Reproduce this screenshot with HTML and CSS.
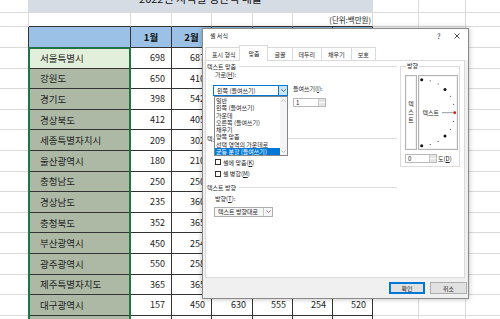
FILE: index.html
```html
<!DOCTYPE html>
<html>
<head>
    <meta charset="utf-8">
    <title>셀 서식</title>
    <link rel="stylesheet" href="styles.css">
</head>
<body>
<div class="sheet">
    <div></div><div class="title">2022년 지역별 생산액 매출</div><div></div><div></div><div></div>

    <div></div><div class="top"></div><div class="top"></div><div class="top"></div><div class="top"></div><div class="top"></div><div class="top unit">(단위:백만원)</div><div></div><div></div><div></div>

    <div class="edge"></div><div class="hd"></div><div class="hd">1월</div><div class="hd">2월</div><div class="hd">3월</div><div class="hd">4월</div><div class="hd">5월</div><div class="hd">6월</div><div></div><div></div><div></div>

    <div class="edge"></div><div class="rg act">서울특별시</div><div class="n">698</div><div class="n">687</div><div class="n">520</div><div class="n">415</div><div class="n">633</div><div class="n">478</div><div></div><div></div><div></div>
    <div class="edge"></div><div class="rg">강원도</div><div class="n">650</div><div class="n">410</div><div class="n">365</div><div class="n">254</div><div class="n">520</div><div class="n">610</div><div></div><div></div><div></div>
    <div class="edge"></div><div class="rg">경기도</div><div class="n">398</div><div class="n">542</div><div class="n">630</div><div class="n">555</div><div class="n">412</div><div class="n">398</div><div></div><div></div><div></div>
    <div class="edge"></div><div class="rg">경상북도</div><div class="n">412</div><div class="n">405</div><div class="n">254</div><div class="n">365</div><div class="n">450</div><div class="n">520</div><div></div><div></div><div></div>
    <div class="edge"></div><div class="rg">세종특별자치시</div><div class="n">209</div><div class="n">302</div><div class="n">450</div><div class="n">236</div><div class="n">540</div><div class="n">365</div><div></div><div></div><div></div>
    <div class="edge"></div><div class="rg">울산광역시</div><div class="n">180</div><div class="n">210</div><div class="n">320</div><div class="n">410</div><div class="n">250</div><div class="n">365</div><div></div><div></div><div></div>
    <div class="edge"></div><div class="rg">충청남도</div><div class="n">250</div><div class="n">250</div><div class="n">365</div><div class="n">450</div><div class="n">520</div><div class="n">254</div><div></div><div></div><div></div>
    <div class="edge"></div><div class="rg">경상남도</div><div class="n">235</div><div class="n">360</div><div class="n">410</div><div class="n">630</div><div class="n">555</div><div class="n">254</div><div></div><div></div><div></div>
    <div class="edge"></div><div class="rg">충청북도</div><div class="n">352</div><div class="n">365</div><div class="n">254</div><div class="n">450</div><div class="n">630</div><div class="n">555</div><div></div><div></div><div></div>
    <div class="edge"></div><div class="rg">부산광역시</div><div class="n">450</div><div class="n">254</div><div class="n">365</div><div class="n">520</div><div class="n">410</div><div class="n">236</div><div></div><div></div><div></div>
    <div class="edge"></div><div class="rg">광주광역시</div><div class="n">550</div><div class="n">258</div><div class="n">630</div><div class="n">555</div><div class="n">254</div><div class="n">520</div><div></div><div></div><div></div>
    <div class="edge"></div><div class="rg">제주특별자치도</div><div class="n">365</div><div class="n">365</div><div class="n">450</div><div class="n">250</div><div class="n">630</div><div class="n">410</div><div></div><div></div><div></div>
    <div class="edge"></div><div class="rg">대구광역시</div><div class="n">157</div><div class="n">450</div><div class="n">630</div><div class="n">555</div><div class="n">254</div><div class="n">520</div><div></div><div></div><div></div>
    <div class="edge"></div><div class="rg">대전광역시</div><div class="n">320</div><div class="n">410</div><div class="n">254</div><div class="n">365</div><div class="n">450</div><div class="n">630</div><div></div><div></div><div></div>

    <div class="sel"></div>
</div>

<div class="dialog">
    <div class="titlebar">
        <span class="dlg-title">셀 서식</span>
        <span class="tb-btn">?</span>
        <span class="tb-btn">
            <svg width="6" height="6" viewBox="0 0 6 6"><path d="M0.5 0.5L5.5 5.5M5.5 0.5L0.5 5.5" stroke="#222" stroke-width="0.8"/></svg>
        </span>
    </div>
    <div class="tabs">
        <span class="tab">표시 형식</span>
        <span class="tab on">맞춤</span>
        <span class="tab">글꼴</span>
        <span class="tab">테두리</span>
        <span class="tab">채우기</span>
        <span class="tab">보호</span>
    </div>

    <div class="page">
        <div class="left">
            <div class="grp grp-first"><span>텍스트 맞춤</span></div>
            <div class="lbl lbl-h">가로(<u>H</u>):</div>
            <div class="hrow">
                <div class="dd">
                    <div class="combo focus">
                        <span>왼쪽 (들여쓰기)</span>
                        <i class="arrow"><svg width="5" height="3" viewBox="0 0 5 3"><path d="M0.3 0.3L2.5 2.5L4.7 0.3" fill="none" stroke="#333" stroke-width="0.7"/></svg></i>
                    </div>
                    <div class="list">
                        <ul>
                            <li>일반</li>
                            <li>왼쪽 (들여쓰기)</li>
                            <li>가운데</li>
                            <li>오른쪽 (들여쓰기)</li>
                            <li>채우기</li>
                            <li>양쪽 맞춤</li>
                            <li>선택 영역의 가운데로</li>
                            <li class="picked">균등 분할 (들여쓰기)</li>
                        </ul>
                        <div class="vscroll">
                            <svg width="5" height="3" viewBox="0 0 5 3"><path d="M0.3 2.7L2.5 0.5L4.7 2.7" fill="none" stroke="#aaa" stroke-width="0.7"/></svg>
                            <svg width="5" height="3" viewBox="0 0 5 3"><path d="M0.3 0.3L2.5 2.5L4.7 0.3" fill="none" stroke="#aaa" stroke-width="0.7"/></svg>
                        </div>
                    </div>
                </div>
                <div class="indent">
                    <div class="lbl">들여쓰기(<u>I</u>):</div>
                    <div class="spin spin-indent"><span>1</span><i class="spin-btn"></i></div>
                </div>
            </div>

            <div class="grp grp-wrap"><span>텍스트 조정</span></div>
            <div class="chk chk-first"><i></i>텍스트 줄 바꿈(<u>W</u>)</div>
            <div class="chk"><i></i>셀에 맞춤(<u>K</u>)</div>
            <div class="chk"><i></i>셀 병합(<u>M</u>)</div>

            <div class="grp grp-dir"><span>텍스트 방향</span></div>
            <div class="lbl lbl-t">방향(<u>T</u>):</div>
            <div class="combo plain">
                <span>텍스트 방향대로</span>
                <i class="arrow"><svg width="5" height="3" viewBox="0 0 5 3"><path d="M0.3 0.3L2.5 2.5L4.7 0.3" fill="none" stroke="#555" stroke-width="0.7"/></svg></i>
            </div>
        </div>

        <fieldset class="orient">
            <legend>방향</legend>
            <div class="orient-boxes">
                <div class="vtext"><span>텍</span><span>스</span><span>트</span></div>
                <div class="arc">
                    <svg width="38" height="73" viewBox="1 1 38 73">
                        <g fill="#111">
                            <circle cx="3.7" cy="4.7" r="1.5"/>
                            <circle cx="12.2" cy="5.8" r="0.5"/>
                            <circle cx="20.2" cy="9.1" r="0.5"/>
                            <circle cx="27" cy="14.4" r="1.5"/>
                            <circle cx="32.3" cy="21.2" r="0.5"/>
                            <circle cx="35.6" cy="29.2" r="0.5"/>
                            <circle cx="35.6" cy="46.2" r="0.5"/>
                            <circle cx="32.3" cy="54.2" r="0.5"/>
                            <circle cx="27" cy="61" r="1.5"/>
                            <circle cx="20.2" cy="66.3" r="0.5"/>
                            <circle cx="12.2" cy="69.6" r="0.5"/>
                            <circle cx="3.7" cy="70.7" r="1.5"/>
                        </g>
                        <text x="4.5" y="39.8" font-size="6" fill="#222">텍스트</text>
                        <path d="M24 37.7H35" stroke="#555" stroke-width="0.6"/>
                        <circle cx="36.7" cy="37.7" r="1.4" fill="#d21414"/>
                    </svg>
                </div>
            </div>
            <div class="deg">
                <div class="spin spin-deg"><span>0</span><i class="spin-btn"></i></div>
                <span>도(<u>D</u>)</span>
            </div>
        </fieldset>
    </div>

    <div class="footer">
        <span class="btn default">확인</span>
        <span class="btn">취소</span>
    </div>
</div>
</body>
</html>
```

FILE: styles.css
```css
html, body {
    margin: 0;
    padding: 0;
}
body {
    width: 500px;
    height: 319px;
    overflow: hidden;
    position: relative;
    background: #fff;
    font-family: "Noto Sans CJK KR", "Noto Sans", sans-serif;
    color: #222;
}

/* worksheet */
.sheet {
    display: grid;
    grid-template-columns: 29px 102px 41px 40px 41px 40px 40px 40px 46px 47px 46px;
    grid-template-rows: 30px 14px 21px repeat(14, 20.6px);
    margin-top: -17px;
    position: relative;
    font-size: 9.5px;
}
.sheet > div {
    box-sizing: border-box;
    border-right: 1px solid #dadada;
    border-bottom: 1px solid #dadada;
    display: flex;
    align-items: center;
    white-space: nowrap;
    overflow: hidden;
}
.sheet .title {
    grid-column: span 7;
    background: #d6dce4;
    justify-content: center;
    align-items: flex-end;
    padding-bottom: 7px;
    font-size: 11px;
    line-height: 14px;
    color: #111;
}
.sheet .top {
    border-bottom-color: #333;
}
.sheet .unit {
    grid-column: span 2;
    justify-content: flex-end;
    padding-right: 1px;
    font-size: 7.5px;
}
.sheet .edge {
    border-right-color: #333;
}
.sheet .hd {
    background: #9bc2e6;
    justify-content: center;
    font-weight: bold;
    border-color: #333;
    color: #111;
}
.sheet .rg {
    background: #adb9a5;
    padding-left: 11px;
    border-color: #333;
}
.sheet .rg.act {
    background: #e2efda;
}
.sheet .n {
    justify-content: flex-end;
    padding-right: 6px;
    border-color: #333;
    font-size: 9px;
}
.sheet .sel {
    position: absolute;
    grid-column: 2 / 3;
    grid-row: 4 / 18;
    top: -1px;
    left: -1px;
    right: 0;
    bottom: 0;
    border: 2px solid #217346;
    border-bottom: none;
    box-sizing: border-box;
}

/* format cells dialog */
.dialog {
    position: absolute;
    left: 202px;
    top: 28px;
    width: 267px;
    height: 271px;
    box-sizing: border-box;
    border: 1px solid #8a8a8a;
    background: #f0f0f0;
    box-shadow: 0 0 5px rgba(0, 0, 0, 0.28);
    display: flex;
    flex-direction: column;
    font-size: 6px;
    color: #1e1e1e;
}
.titlebar {
    height: 16px;
    background: #fff;
    display: flex;
    align-items: center;
    padding: 0 2px 3px 7px;
    box-sizing: border-box;
}
.dlg-title {
    flex: 1;
}
.tb-btn {
    width: 18px;
    height: 12px;
    display: flex;
    align-items: center;
    justify-content: center;
    font-size: 7px;
}
.tabs {
    height: 15px;
    display: flex;
    align-items: flex-end;
    padding-left: 2px;
    background: #fff;
}
.tab {
    height: 13px;
    box-sizing: border-box;
    padding: 0 6px;
    border: 1px solid #dadada;
    border-bottom: none;
    margin-right: -1px;
    display: flex;
    align-items: center;
    background: #fff;
}
.tab.on {
    height: 16px;
    margin: 0 -1px -1px -2px;
    padding: 0 8px;
    position: relative;
    z-index: 1;
}
.page {
    flex: 1;
    margin: 0 3px 0 2px;
    border: 1px solid #dadada;
    background: #fff;
    display: flex;
    padding-left: 1px;
}
.left {
    width: 190px;
    display: flex;
    flex-direction: column;
}
.grp {
    height: 8px;
    display: flex;
    align-items: center;
}
.grp::after {
    content: "";
    flex: 1;
    border-top: 1px solid #dcdcdc;
    margin-left: 3px;
}
.grp-first {
    margin-top: 1px;
}
.lbl {
    height: 8px;
    line-height: 8px;
}
.lbl-h {
    margin: 1px 0 0 8px;
}
.hrow {
    display: flex;
    align-items: flex-start;
    margin: 6px 0 0 6px;
    gap: 5px;
}
.dd {
    position: relative;
    width: 75px;
}
.combo {
    height: 11px;
    box-sizing: border-box;
    border: 1px solid #adadad;
    background: #fff;
    display: flex;
    align-items: center;
    padding-left: 3px;
}
.combo span {
    flex: 1;
}
.combo .arrow {
    width: 8px;
    align-self: stretch;
    display: flex;
    align-items: center;
    justify-content: center;
}
.combo.focus {
    border-color: #0078d7;
}
.combo.focus .arrow {
    background: #cce4f7;
    border-left: 1px solid #0078d7;
}
.combo.plain {
    width: 59px;
    height: 10px;
    margin: 4px 0 0 7px;
    background: #f7f7f7;
}
.combo.plain .arrow {
    border-left: 1px solid #c8c8c8;
}
.list {
    position: absolute;
    top: 100%;
    left: 1px;
    right: 0;
    height: 60px;
    box-sizing: border-box;
    border: 1px solid #828790;
    background: #fff;
    display: flex;
    z-index: 2;
}
.list ul {
    flex: 1;
    margin: 0;
    padding: 0;
    list-style: none;
}
.list li {
    height: 7.3px;
    line-height: 7.3px;
    padding-left: 1px;
    white-space: nowrap;
}
.list li.picked {
    background: #0078d7;
    color: #fff;
}
.vscroll {
    width: 7px;
    background: #f4f4f4;
    display: flex;
    flex-direction: column;
    justify-content: space-between;
    align-items: center;
    padding: 2px 0;
}
.indent {
    width: 33px;
}
.spin {
    height: 9px;
    box-sizing: border-box;
    border: 1px solid #b9b9b9;
    background: #fff;
    display: flex;
    align-items: center;
    padding-left: 2px;
}
.spin span {
    flex: 1;
}
.spin-btn {
    width: 6px;
    align-self: stretch;
    background: linear-gradient(#e4e4e4 0 45%, #fff 45% 55%, #e4e4e4 55%);
    border-left: 1px solid #c8c8c8;
}
.spin-indent {
    margin-top: 5px;
}
.grp-wrap {
    margin-top: 27.5px;
}
.chk {
    height: 11.6px;
    display: flex;
    align-items: center;
    padding-left: 8px;
}
.chk-first {
    margin-top: 2.5px;
}
.chk i {
    width: 6px;
    height: 6px;
    box-sizing: border-box;
    border: 1px solid #333;
    background: #fff;
    margin-right: 2px;
}
.grp-dir {
    margin-top: 3.3px;
}
.lbl-t {
    margin: 3.7px 0 0 8px;
}

.orient {
    width: 60px;
    box-sizing: border-box;
    margin: 1px 0 0 3px;
    padding: 0 1px 3px 4px;
    border: 1px solid #dcdcdc;
    align-self: flex-start;
    min-width: 0;
}
.orient legend {
    padding: 0 1px;
    margin-left: 1px;
    line-height: 8px;
}
.orient-boxes {
    display: flex;
    gap: 1px;
    margin-top: 5px;
    height: 75px;
}
.vtext, .arc {
    box-sizing: border-box;
    border: 1px solid #b4b4b4;
    box-shadow: inset 0 0 0 1px #f2f2f2;
}
.vtext {
    width: 12px;
    display: flex;
    flex-direction: column;
    justify-content: center;
    align-items: center;
    line-height: 8px;
    padding-bottom: 2px;
}
.arc {
    width: 40px;
}
.arc svg {
    display: block;
}
.deg {
    display: flex;
    align-items: center;
    margin-top: 4px;
    gap: 1px;
}
.spin-deg {
    width: 32px;
}
.footer {
    height: 20px;
    display: flex;
    justify-content: flex-end;
    align-items: center;
    gap: 5px;
    padding-right: 1px;
}
.btn {
    width: 37px;
    height: 12px;
    box-sizing: border-box;
    border: 1px solid #adadad;
    background: #e1e1e1;
    display: flex;
    align-items: center;
    justify-content: center;
}
.btn.default {
    border-color: #0078d7;
    box-shadow: inset 0 0 0 1px #0078d7;
    width: 36px;
}
```
